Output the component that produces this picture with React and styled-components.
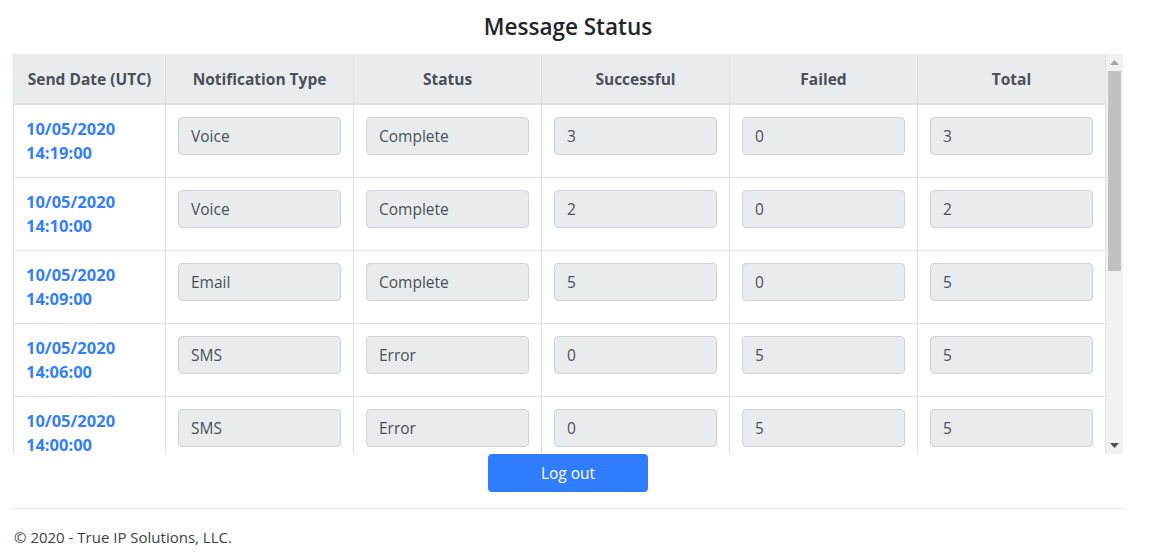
import React from "react"
import styled, { createGlobalStyle } from "styled-components"

const GlobalStyle = createGlobalStyle`
    body {
        margin: 0;
        font-family: "Open Sans", "Noto Sans", sans-serif;
        font-size: 16px;
        line-height: 1.5;
        color: #212529;
        background: #fff;
    }
`

const rows = [
    { date: "10/05/2020", time: "14:19:00", type: "Voice", status: "Complete", ok: 3, failed: 0, total: 3 },
    { date: "10/05/2020", time: "14:10:00", type: "Voice", status: "Complete", ok: 2, failed: 0, total: 2 },
    { date: "10/05/2020", time: "14:09:00", type: "Email", status: "Complete", ok: 5, failed: 0, total: 5 },
    { date: "10/05/2020", time: "14:06:00", type: "SMS", status: "Error", ok: 0, failed: 5, total: 5 },
    { date: "10/05/2020", time: "14:00:00", type: "SMS", status: "Error", ok: 0, failed: 5, total: 5 },
    { date: "10/05/2020", time: "13:52:00", type: "Email", status: "Complete", ok: 4, failed: 0, total: 4 },
    { date: "10/05/2020", time: "13:45:00", type: "Voice", status: "Complete", ok: 3, failed: 0, total: 3 },
    { date: "10/04/2020", time: "17:30:00", type: "SMS", status: "Complete", ok: 6, failed: 0, total: 6 },
    { date: "10/04/2020", time: "16:12:00", type: "Email", status: "Complete", ok: 2, failed: 0, total: 2 },
]

const Page = styled.div`
    width: 1110px;
    margin-left: 13px;
`

const Title = styled.h4`
    margin: 0;
    padding: 13px 0 14px;
    text-align: center;
    font-size: 22.5px;
    font-weight: 600;
    line-height: 1.2;
    color: #212529;
`

const Frame = styled.div`
    display: flex;
    height: 400px;
`

const ScrollBox = styled.div`
    flex: 1;
    overflow: hidden;
`

const ScrollBar = styled.div`
    width: 17px;
    display: flex;
    flex-direction: column;
    background: #f1f1f1;
`

const ArrowButton = styled.div`
    height: 17px;
    display: flex;
    align-items: center;
    justify-content: center;
`

const Thumb = styled.div`
    height: 200px;
    margin: 0 2px;
    background: #c1c1c1;
`

const Spacer = styled.div`
    flex: 1;
`

const Table = styled.table`
    width: 100%;
    table-layout: fixed;
    border-collapse: collapse;
`

const HeadCell = styled.th`
    padding: 13px 12px 12px;
    background: #e9ecef;
    color: #495057;
    font-weight: 700;
    font-size: 15.5px;
    line-height: 24px;
    text-align: center;
    border: 1px solid #dee2e6;
    border-top: 0;
    border-bottom: 2px solid #dee2e6;
    white-space: nowrap;
`

const Cell = styled.td`
    padding: 12px;
    vertical-align: top;
    border: 1px solid #dee2e6;
`

const DateLink = styled.a`
    display: block;
    color: #347ff7;
    font-weight: 700;
    font-size: 16.5px;
    line-height: 24px;
    text-decoration: none;
`

const Field = styled.input`
    display: block;
    box-sizing: border-box;
    width: 100%;
    height: 38px;
    padding: 6px 12px;
    font-family: inherit;
    font-size: 15.5px;
    color: #495057;
    background: #e9ecef;
    border: 1px solid #ced4da;
    border-radius: 4px;
    outline: none;
`

const Actions = styled.div`
    display: flex;
    justify-content: center;
`

const Button = styled.button`
    width: 160px;
    height: 38px;
    border: 0;
    border-radius: 4px;
    background: #317dff;
    color: #fff;
    font-family: inherit;
    font-size: 15.5px;
    cursor: pointer;
`

const Rule = styled.hr`
    margin: 16px 0 0;
    border: 0;
    border-top: 1px solid #e3e5e8;
`

const Footer = styled.footer`
    padding: 16px 0 0 1px;
    font-size: 15px;
    line-height: 24px;
    color: #3a3f44;
`

const Arrow = ({ up, color }) => (
    <svg width="9" height="5" viewBox="0 0 9 5">
        <polygon points={up ? "0,5 9,5 4.5,0" : "0,0 9,0 4.5,5"} fill={color} />
    </svg>
)

const columns = ["Send Date (UTC)", "Notification Type", "Status", "Successful", "Failed", "Total"]

const App = () => (
    <>
        <GlobalStyle />
        <Page>
            <Title>Message Status</Title>
            <Frame>
                <ScrollBox>
                    <Table>
                        <colgroup>
                            <col style={{ width: 152 }} />
                            <col />
                            <col />
                            <col />
                            <col />
                            <col />
                        </colgroup>
                        <thead>
                            <tr>
                                {columns.map((c) => (
                                    <HeadCell key={c}>{c}</HeadCell>
                                ))}
                            </tr>
                        </thead>
                        <tbody>
                            {rows.map((r, i) => (
                                <tr key={i}>
                                    <Cell>
                                        <DateLink href="#">{r.date}</DateLink>
                                        <DateLink href="#">{r.time}</DateLink>
                                    </Cell>
                                    <Cell><Field readOnly value={r.type} /></Cell>
                                    <Cell><Field readOnly value={r.status} /></Cell>
                                    <Cell><Field readOnly value={r.ok} /></Cell>
                                    <Cell><Field readOnly value={r.failed} /></Cell>
                                    <Cell><Field readOnly value={r.total} /></Cell>
                                </tr>
                            ))}
                        </tbody>
                    </Table>
                </ScrollBox>
                <ScrollBar>
                    <ArrowButton><Arrow up color="#a3a3a3" /></ArrowButton>
                    <Thumb />
                    <Spacer />
                    <ArrowButton><Arrow color="#505050" /></ArrowButton>
                </ScrollBar>
            </Frame>
            <Actions>
                <Button>Log out</Button>
            </Actions>
            <Rule />
            <Footer>© 2020 - True IP Solutions, LLC.</Footer>
        </Page>
    </>
)

export default App
